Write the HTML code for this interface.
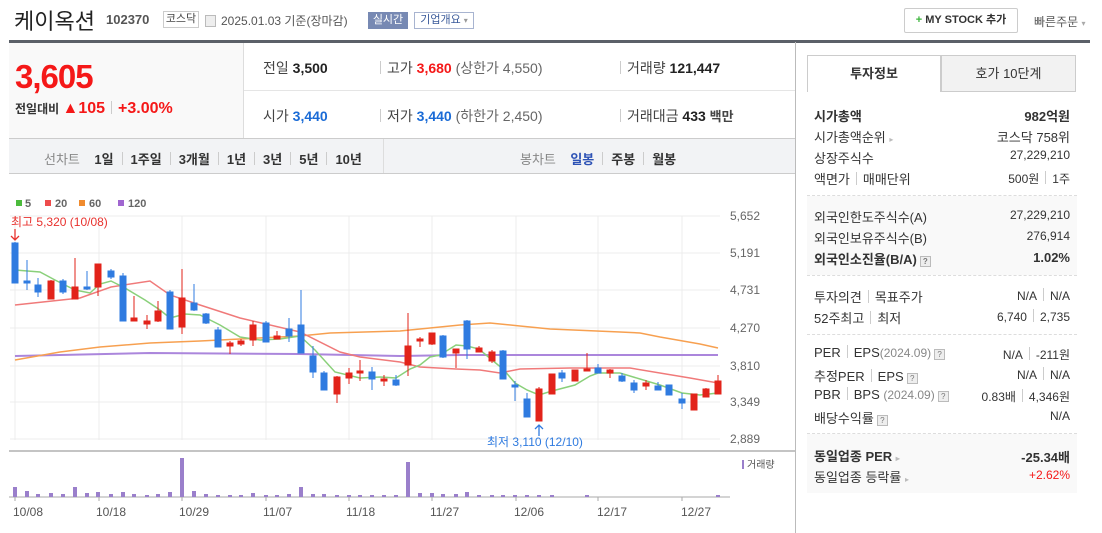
<!DOCTYPE html>
<html><head><meta charset="utf-8"><style>
*{margin:0;padding:0;box-sizing:border-box}
body{width:1102px;height:533px;overflow:hidden;background:#fff;font-family:"Liberation Sans","Noto Sans CJK KR",sans-serif;color:#333;position:relative}
.a{position:absolute;white-space:nowrap}
.b{font-weight:bold}
.red{color:#f51818}.blue{color:#1a6bd6}
.sep{display:inline-block;width:1px;height:13px;background:#ccc;vertical-align:-1px;margin:0 6px}
.tb .sep{margin:0 8px}
.rp{font-size:13px;color:#333}
.q{display:inline-block;width:11px;height:11px;border:1px solid #bbb;background:#eee;font-size:8px;line-height:9px;text-align:center;color:#777;vertical-align:0;margin-left:3px}
</style></head><body>
<div class="a" style="left:14px;top:4px;font-size:22px;color:#222">케이옥션</div>
<div class="a b" style="left:106px;top:12px;font-size:13px;color:#555">102370</div>
<div class="a" style="left:163px;top:11px;width:36px;font-size:11px;border:1px solid #ccc;line-height:15px;color:#444;text-align:center;overflow:hidden">코스닥</div>
<div class="a" style="left:205px;top:15px;width:11px;height:12px;border:1px solid #bbb;background:#eee"></div>
<div class="a" style="left:221px;top:12px;font-size:12px;color:#555">2025.01.03 기준(장마감)</div>
<div class="a" style="left:368px;top:12px;width:40px;font-size:11px;background:#7789b3;color:#fff;line-height:17px;text-align:center">실시간</div>
<div class="a" style="left:414px;top:12px;width:60px;font-size:11px;border:1px solid #a8b4d0;color:#3a5a9a;line-height:15px;text-align:center">기업개요 <span style="font-size:8px;color:#999">▾</span></div>
<div class="a" style="left:904px;top:8px;width:114px;height:25px;border:1px solid #ccc;border-radius:2px;font-size:11px;font-weight:bold;line-height:23px;text-align:center;color:#333"><span style="color:#3bb53b">+</span> MY STOCK 추가</div>
<div class="a" style="left:1034px;top:13px;font-size:12px;color:#555">빠른주문 <span style="font-size:8px;color:#aaa">▾</span></div>
<div class="a" style="left:9px;top:40px;width:1081px;height:3px;background:#5b6068"></div>
<div class="a" style="left:9px;top:43px;width:235px;height:96px;background:#f9f9f9;border-right:1px solid #ddd"></div>
<div class="a b red" style="left:15px;top:58px;font-size:33px;letter-spacing:-1px">3,605</div>
<div class="a" style="left:15px;top:100px;font-size:12px;color:#333;font-weight:bold">전일대비 <span class="red" style="font-size:16px">▲105</span><span class="sep"></span><span class="red" style="font-size:16px">+3.00%</span></div>
<div class="a" style="left:244px;top:90px;width:551px;height:1px;background:#e5e5e5"></div>
<div class="a" style="left:9px;top:138px;width:786px;height:1px;background:#ccc"></div>
<div class="a" style="left:263px;top:58px;font-size:14px;color:#444">전일 <b style="color:#222">3,500</b></div>
<div class="a" style="left:380px;top:58px;font-size:14px;color:#444"><span class="sep" style="margin-left:0"></span>고가 <b class="red">3,680</b> <span style="color:#666">(상한가 4,550)</span></div>
<div class="a" style="left:620px;top:58px;font-size:14px;color:#444"><span class="sep" style="margin-left:0"></span>거래량 <b style="color:#222">121,447</b></div>
<div class="a" style="left:263px;top:106px;font-size:14px;color:#444">시가 <b class="blue">3,440</b></div>
<div class="a" style="left:380px;top:106px;font-size:14px;color:#444"><span class="sep" style="margin-left:0"></span>저가 <b class="blue">3,440</b> <span style="color:#666">(하한가 2,450)</span></div>
<div class="a" style="left:620px;top:106px;font-size:14px;color:#444"><span class="sep" style="margin-left:0"></span>거래대금 <b style="color:#222">433</b> <b style="font-size:13px">백만</b></div>
<div class="a" style="left:9px;top:139px;width:786px;height:35px;background:#f2f3f5;border-bottom:1px solid #ccc"></div>
<div class="a" style="left:383px;top:139px;width:1px;height:34px;background:#ddd"></div>
<div class="a b tb" style="left:44px;top:149px;font-size:13px;color:#333"><span style="color:#888;font-weight:normal">선차트</span>&nbsp;&nbsp;&nbsp; 1일<span class="sep"></span>1주일<span class="sep"></span>3개월<span class="sep"></span>1년<span class="sep"></span>3년<span class="sep"></span>5년<span class="sep"></span>10년</div>
<div class="a b tb" style="left:520px;top:149px;font-size:13px;color:#333"><span style="color:#888;font-weight:normal">봉차트</span>&nbsp;&nbsp;&nbsp; <span style="color:#2d52b5">일봉</span><span class="sep"></span>주봉<span class="sep"></span>월봉</div>
<div class="a" style="left:795px;top:42px;width:1px;height:491px;background:#bbb"></div>

<svg class="a" style="left:0;top:175px" width="795" height="358" viewBox="0 175 795 358" font-family="Liberation Sans, sans-serif">
<g stroke="#ececec" stroke-width="1">
<line x1="10" y1="216" x2="720" y2="216"/><line x1="10" y1="253" x2="720" y2="253"/><line x1="10" y1="290" x2="720" y2="290"/><line x1="10" y1="328" x2="720" y2="328"/><line x1="10" y1="366" x2="720" y2="366"/><line x1="10" y1="402" x2="720" y2="402"/><line x1="10" y1="439" x2="720" y2="439"/>
<line x1="15" y1="216" x2="15" y2="440"/><line x1="99" y1="216" x2="99" y2="440"/><line x1="182" y1="216" x2="182" y2="440"/><line x1="266" y1="216" x2="266" y2="440"/><line x1="349" y1="216" x2="349" y2="440"/><line x1="432" y1="216" x2="432" y2="440"/><line x1="516" y1="216" x2="516" y2="440"/><line x1="598" y1="216" x2="598" y2="440"/><line x1="682" y1="216" x2="682" y2="440"/>
</g>
<g font-size="11" fill="#666" font-weight="bold"><rect x="16" y="200" width="6" height="6" fill="#4cbb3c"/><text x="25" y="207">5</text><rect x="45" y="200" width="6" height="6" fill="#ee4c4c"/><text x="55" y="207">20</text><rect x="79" y="200" width="6" height="6" fill="#f08b2e"/><text x="89" y="207">60</text><rect x="118" y="200" width="6" height="6" fill="#a066d0"/><text x="128" y="207">120</text></g>
<text x="11" y="226" font-size="12" fill="#e8322e">최고 5,320 (10/08)</text>
<path d="M15 229v11M11 236l4 4 4-4" stroke="#e8322e" fill="none" stroke-width="1.3"/>
<g font-size="12" fill="#666"><text x="730" y="220">5,652</text><text x="730" y="257">5,191</text><text x="730" y="294">4,731</text><text x="730" y="332">4,270</text><text x="730" y="370">3,810</text><text x="730" y="406">3,349</text><text x="730" y="443">2,889</text></g>
<g fill="none" stroke-width="1.5">
<polyline stroke="#ab86dc" stroke-width="2" points="15,356 150,353 300,354 400,356 460,355 540,355 718,355"/>
<polyline stroke="#f7a050" points="15,360 60,352 100,347 150,343 200,341 300,336 330,333 400,331 460,325 490,323 520,326 550,329 620,332 640,333 660,337 700,344 718,348"/>
<polyline stroke="#f07a7a" points="15,305 80,298 111,287 150,281 170,295 200,305 240,318 300,332 340,352 360,357 400,362 420,367 456,369 480,370 500,373 520,369 570,368 630,368 690,378 718,383"/>
<polyline stroke="#8ad07a" points="15,270 40,272 55,280 75,290 90,293 100,284 111,281 125,288 145,300 160,310 170,318 185,314 200,315 220,325 240,337 260,340 280,339 300,336 315,350 335,372 360,378 380,377 396,378 410,369 420,365 430,357 440,355 456,345 467,346 479,349 492,360 503,369 515,383 527,390 539,395 552,391 575,385 590,376 598,373 620,373 640,379 660,385 682,393 700,395 718,393"/>
</g>
<g stroke="#2f7be0" fill="#2f7be0">
<line x1="15" y1="242" x2="15" y2="283"/><rect x="12" y="243" width="6" height="40"/>
<line x1="27" y1="260" x2="27" y2="290"/><rect x="24" y="281" width="6" height="2"/>
<line x1="38" y1="278" x2="38" y2="297"/><rect x="35" y="285" width="6" height="7"/>
<line x1="63" y1="279" x2="63" y2="294"/><rect x="60" y="281" width="6" height="11"/>
<line x1="87" y1="271" x2="87" y2="290"/><rect x="84" y="287" width="6" height="2"/>
<line x1="111" y1="269" x2="111" y2="279"/><rect x="108" y="271" width="6" height="6"/>
<line x1="123" y1="273" x2="123" y2="321"/><rect x="120" y="276" width="6" height="45"/>
<line x1="170" y1="290" x2="170" y2="329"/><rect x="167" y="292" width="6" height="37"/>
<line x1="194" y1="284" x2="194" y2="311"/><rect x="191" y="303" width="6" height="7"/>
<line x1="206" y1="313" x2="206" y2="324"/><rect x="203" y="314" width="6" height="9"/>
<line x1="218" y1="327" x2="218" y2="347"/><rect x="215" y="330" width="6" height="17"/>
<line x1="266" y1="321" x2="266" y2="342"/><rect x="263" y="323" width="6" height="19"/>
<line x1="289" y1="318" x2="289" y2="342"/><rect x="286" y="329" width="6" height="7"/>
<line x1="301" y1="290" x2="301" y2="353"/><rect x="298" y="325" width="6" height="28"/>
<line x1="313" y1="346" x2="313" y2="378"/><rect x="310" y="356" width="6" height="16"/>
<line x1="324" y1="371" x2="324" y2="390"/><rect x="321" y="373" width="6" height="17"/>
<line x1="372" y1="367" x2="372" y2="390"/><rect x="369" y="372" width="6" height="7"/>
<line x1="396" y1="375" x2="396" y2="386"/><rect x="393" y="380" width="6" height="5"/>
<line x1="443" y1="335" x2="443" y2="358"/><rect x="440" y="336" width="6" height="21"/>
<line x1="467" y1="320" x2="467" y2="359"/><rect x="464" y="321" width="6" height="28"/>
<line x1="503" y1="350" x2="503" y2="379"/><rect x="500" y="351" width="6" height="28"/>
<line x1="515" y1="381" x2="515" y2="401"/><rect x="512" y="385" width="6" height="2"/>
<line x1="527" y1="393" x2="527" y2="417"/><rect x="524" y="399" width="6" height="18"/>
<line x1="562" y1="370" x2="562" y2="382"/><rect x="559" y="373" width="6" height="5"/>
<line x1="598" y1="364" x2="598" y2="373"/><rect x="595" y="368" width="6" height="5"/>
<line x1="622" y1="373" x2="622" y2="382"/><rect x="619" y="376" width="6" height="5"/>
<line x1="634" y1="380" x2="634" y2="393"/><rect x="631" y="383" width="6" height="7"/>
<line x1="658" y1="382" x2="658" y2="390"/><rect x="655" y="386" width="6" height="4"/>
<line x1="669" y1="385" x2="669" y2="395"/><rect x="666" y="385" width="6" height="10"/>
<line x1="682" y1="393" x2="682" y2="409"/><rect x="679" y="399" width="6" height="4"/>
</g>
<g stroke="#e2231a" fill="#e2231a">
<line x1="51" y1="280" x2="51" y2="299"/><rect x="48" y="281" width="6" height="18"/>
<line x1="75" y1="258" x2="75" y2="299"/><rect x="72" y="287" width="6" height="12"/>
<line x1="98" y1="264" x2="98" y2="296"/><rect x="95" y="264" width="6" height="23"/>
<line x1="134" y1="296" x2="134" y2="321"/><rect x="131" y="318" width="6" height="3"/>
<line x1="147" y1="315" x2="147" y2="329"/><rect x="144" y="321" width="6" height="3"/>
<line x1="158" y1="301" x2="158" y2="322"/><rect x="155" y="311" width="6" height="10"/>
<line x1="182" y1="269" x2="182" y2="334"/><rect x="179" y="298" width="6" height="29"/>
<line x1="230" y1="341" x2="230" y2="354"/><rect x="227" y="343" width="6" height="3"/>
<line x1="241" y1="339" x2="241" y2="346"/><rect x="238" y="341" width="6" height="3"/>
<line x1="253" y1="321" x2="253" y2="346"/><rect x="250" y="325" width="6" height="15"/>
<line x1="277" y1="331" x2="277" y2="339"/><rect x="274" y="336" width="6" height="3"/>
<line x1="337" y1="376" x2="337" y2="403"/><rect x="334" y="377" width="6" height="17"/>
<line x1="349" y1="368" x2="349" y2="384"/><rect x="346" y="373" width="6" height="5"/>
<line x1="360" y1="360" x2="360" y2="381"/><rect x="357" y="371" width="6" height="2"/>
<line x1="384" y1="375" x2="384" y2="386"/><rect x="381" y="379" width="6" height="2"/>
<line x1="408" y1="313" x2="408" y2="376"/><rect x="405" y="346" width="6" height="19"/>
<line x1="420" y1="337" x2="420" y2="347"/><rect x="417" y="339" width="6" height="2"/>
<line x1="432" y1="333" x2="432" y2="345"/><rect x="429" y="333" width="6" height="11"/>
<line x1="456" y1="349" x2="456" y2="368"/><rect x="453" y="349" width="6" height="4"/>
<line x1="479" y1="346" x2="479" y2="352"/><rect x="476" y="348" width="6" height="4"/>
<line x1="492" y1="350" x2="492" y2="363"/><rect x="489" y="352" width="6" height="9"/>
<line x1="539" y1="387" x2="539" y2="421"/><rect x="536" y="389" width="6" height="32"/>
<rect x="549" y="374" width="6" height="20"/>
<rect x="572" y="370" width="6" height="11"/>
<line x1="587" y1="353" x2="587" y2="371"/><rect x="584" y="369" width="6" height="2"/>
<line x1="610" y1="369" x2="610" y2="378"/><rect x="607" y="370" width="6" height="3"/>
<line x1="646" y1="380" x2="646" y2="390"/><rect x="643" y="383" width="6" height="3"/>
<rect x="691" y="394" width="6" height="16"/>
<line x1="706" y1="388" x2="706" y2="397"/><rect x="703" y="389" width="6" height="8"/>
<line x1="718" y1="375" x2="718" y2="394"/><rect x="715" y="381" width="6" height="13"/>
</g>
<path d="M539 436v-11M535 429l4-4 4 4" stroke="#2f7be0" fill="none" stroke-width="1.3"/>
<text x="487" y="446" font-size="12" fill="#2f7be0">최저 3,110 (12/10)</text>
<line x1="9" y1="451" x2="795" y2="451" stroke="#888"/>
<line x1="9" y1="497" x2="730" y2="497" stroke="#aaa"/>
<rect x="742" y="460" width="2" height="9" fill="#9a7fcb"/>
<text x="747" y="468" font-size="10" fill="#555">거래량</text>
<g fill="#9a7fcb">
<rect x="13" y="487" width="4" height="10"/><rect x="25" y="491" width="4" height="6"/><rect x="36" y="494" width="4" height="3"/><rect x="49" y="493" width="4" height="4"/><rect x="61" y="494" width="4" height="3"/><rect x="73" y="487" width="4" height="10"/><rect x="85" y="493" width="4" height="4"/><rect x="96" y="492" width="4" height="5"/><rect x="109" y="494" width="4" height="3"/><rect x="121" y="492" width="4" height="5"/><rect x="132" y="494" width="4" height="3"/><rect x="145" y="495" width="4" height="2"/><rect x="156" y="494" width="4" height="3"/><rect x="168" y="492" width="4" height="5"/><rect x="180" y="458" width="4" height="39"/><rect x="192" y="491" width="4" height="6"/><rect x="204" y="494" width="4" height="3"/><rect x="216" y="495" width="4" height="2"/><rect x="228" y="495" width="4" height="2"/><rect x="239" y="495" width="4" height="2"/><rect x="251" y="493" width="4" height="4"/><rect x="264" y="495" width="4" height="2"/><rect x="275" y="495" width="4" height="2"/><rect x="287" y="494" width="4" height="3"/><rect x="299" y="487" width="4" height="10"/><rect x="311" y="494" width="4" height="3"/><rect x="322" y="494" width="4" height="3"/><rect x="335" y="495" width="4" height="2"/><rect x="347" y="495" width="4" height="2"/><rect x="358" y="495" width="4" height="2"/><rect x="370" y="495" width="4" height="2"/><rect x="382" y="495" width="4" height="2"/><rect x="394" y="495" width="4" height="2"/><rect x="406" y="462" width="4" height="35"/><rect x="418" y="493" width="4" height="4"/><rect x="430" y="493" width="4" height="4"/><rect x="441" y="494" width="4" height="3"/><rect x="454" y="494" width="4" height="3"/><rect x="465" y="492" width="4" height="5"/><rect x="477" y="495" width="4" height="2"/><rect x="490" y="495" width="4" height="2"/><rect x="501" y="495" width="4" height="2"/><rect x="513" y="495" width="4" height="2"/><rect x="525" y="495" width="4" height="2"/><rect x="537" y="495" width="4" height="2"/><rect x="550" y="495" width="4" height="2"/><rect x="585" y="495" width="4" height="2"/><rect x="716" y="495" width="4" height="2"/>
</g>
<g stroke="#aaa"><line x1="15" y1="497" x2="15" y2="501"/><line x1="99" y1="497" x2="99" y2="501"/><line x1="182" y1="497" x2="182" y2="501"/><line x1="266" y1="497" x2="266" y2="501"/><line x1="349" y1="497" x2="349" y2="501"/><line x1="432" y1="497" x2="432" y2="501"/><line x1="516" y1="497" x2="516" y2="501"/><line x1="598" y1="497" x2="598" y2="501"/><line x1="682" y1="497" x2="682" y2="501"/></g>
<g font-size="12" fill="#555"><text x="13" y="516">10/08</text><text x="96" y="516">10/18</text><text x="179" y="516">10/29</text><text x="263" y="516">11/07</text><text x="346" y="516">11/18</text><text x="430" y="516">11/27</text><text x="514" y="516">12/06</text><text x="597" y="516">12/17</text><text x="681" y="516">12/27</text></g>
</svg>

<div class="a" style="left:807px;top:55px;width:134px;height:37px;border:1px solid #ccc;border-bottom:none;background:#fff;font-size:13px;font-weight:bold;text-align:center;line-height:36px">투자정보</div>
<div class="a" style="left:941px;top:55px;width:135px;height:37px;border:1px solid #ccc;background:#f2f2f2;font-size:13px;text-align:center;line-height:36px">호가 10단계</div>
<div class="a" style="left:807px;top:196px;width:270px;height:79px;background:#f9f9f9"></div>
<div class="a" style="left:807px;top:434px;width:270px;height:59px;background:#f9f9f9"></div>
<div class="a" style="left:807px;top:195px;width:270px;border-top:1px dashed #ddd"></div>
<div class="a" style="left:807px;top:275px;width:270px;border-top:1px dashed #ddd"></div>
<div class="a" style="left:807px;top:334px;width:270px;border-top:1px dashed #ddd"></div>
<div class="a" style="left:807px;top:433px;width:270px;border-top:1px dashed #ddd"></div>
<div class="rp">
<div class="a b" style="left:814px;top:106px">시가총액</div><div class="a b" style="right:32px;top:106px">982억원</div>
<div class="a" style="left:814px;top:127px">시가총액순위 <span style="font-size:8px;color:#bbb">▸</span></div><div class="a" style="right:32px;top:127px">코스닥 758위</div>
<div class="a" style="left:814px;top:148px">상장주식수</div><div class="a" style="right:32px;top:148px;font-size:12px">27,229,210</div>
<div class="a" style="left:814px;top:169px">액면가<span class="sep"></span>매매단위</div><div class="a" style="right:32px;top:170px;font-size:12px">500원<span class="sep"></span>1주</div>
<div class="a" style="left:814px;top:207px">외국인한도주식수(A)</div><div class="a" style="right:32px;top:208px;font-size:12px">27,229,210</div>
<div class="a" style="left:814px;top:228px">외국인보유주식수(B)</div><div class="a" style="right:32px;top:229px;font-size:12px">276,914</div>
<div class="a b" style="left:814px;top:249px">외국인소진율(B/A)<span class="q">?</span></div><div class="a b" style="right:32px;top:250px">1.02%</div>
<div class="a" style="left:814px;top:287px">투자의견<span class="sep"></span>목표주가</div><div class="a" style="right:32px;top:288px;font-size:12px">N/A<span class="sep"></span>N/A</div>
<div class="a" style="left:814px;top:308px">52주최고<span class="sep"></span>최저</div><div class="a" style="right:32px;top:309px;font-size:12px">6,740<span class="sep"></span>2,735</div>
<div class="a" style="left:814px;top:345px">PER<span class="sep"></span>EPS<span style="color:#888;font-size:12px">(2024.09)</span><span class="q">?</span></div><div class="a" style="right:32px;top:346px;font-size:12px">N/A<span class="sep"></span>-211원</div>
<div class="a" style="left:814px;top:366px">추정PER<span class="sep"></span>EPS<span class="q">?</span></div><div class="a" style="right:32px;top:367px;font-size:12px">N/A<span class="sep"></span>N/A</div>
<div class="a" style="left:814px;top:387px">PBR<span class="sep"></span>BPS <span style="color:#888;font-size:12px">(2024.09)</span><span class="q">?</span></div><div class="a" style="right:32px;top:388px;font-size:12px">0.83배<span class="sep"></span>4,346원</div>
<div class="a" style="left:814px;top:408px">배당수익률<span class="q">?</span></div><div class="a" style="right:32px;top:409px;font-size:12px">N/A</div>
<div class="a b" style="left:814px;top:446px">동일업종 PER <span style="font-size:8px;color:#bbb">▸</span></div><div class="a b" style="right:32px;top:447px">-25.34배</div>
<div class="a" style="left:814px;top:467px">동일업종 등락률 <span style="font-size:8px;color:#bbb">▸</span></div><div class="a red" style="right:32px;top:468px;font-size:12px">+2.62%</div>
</div>
</body></html>
